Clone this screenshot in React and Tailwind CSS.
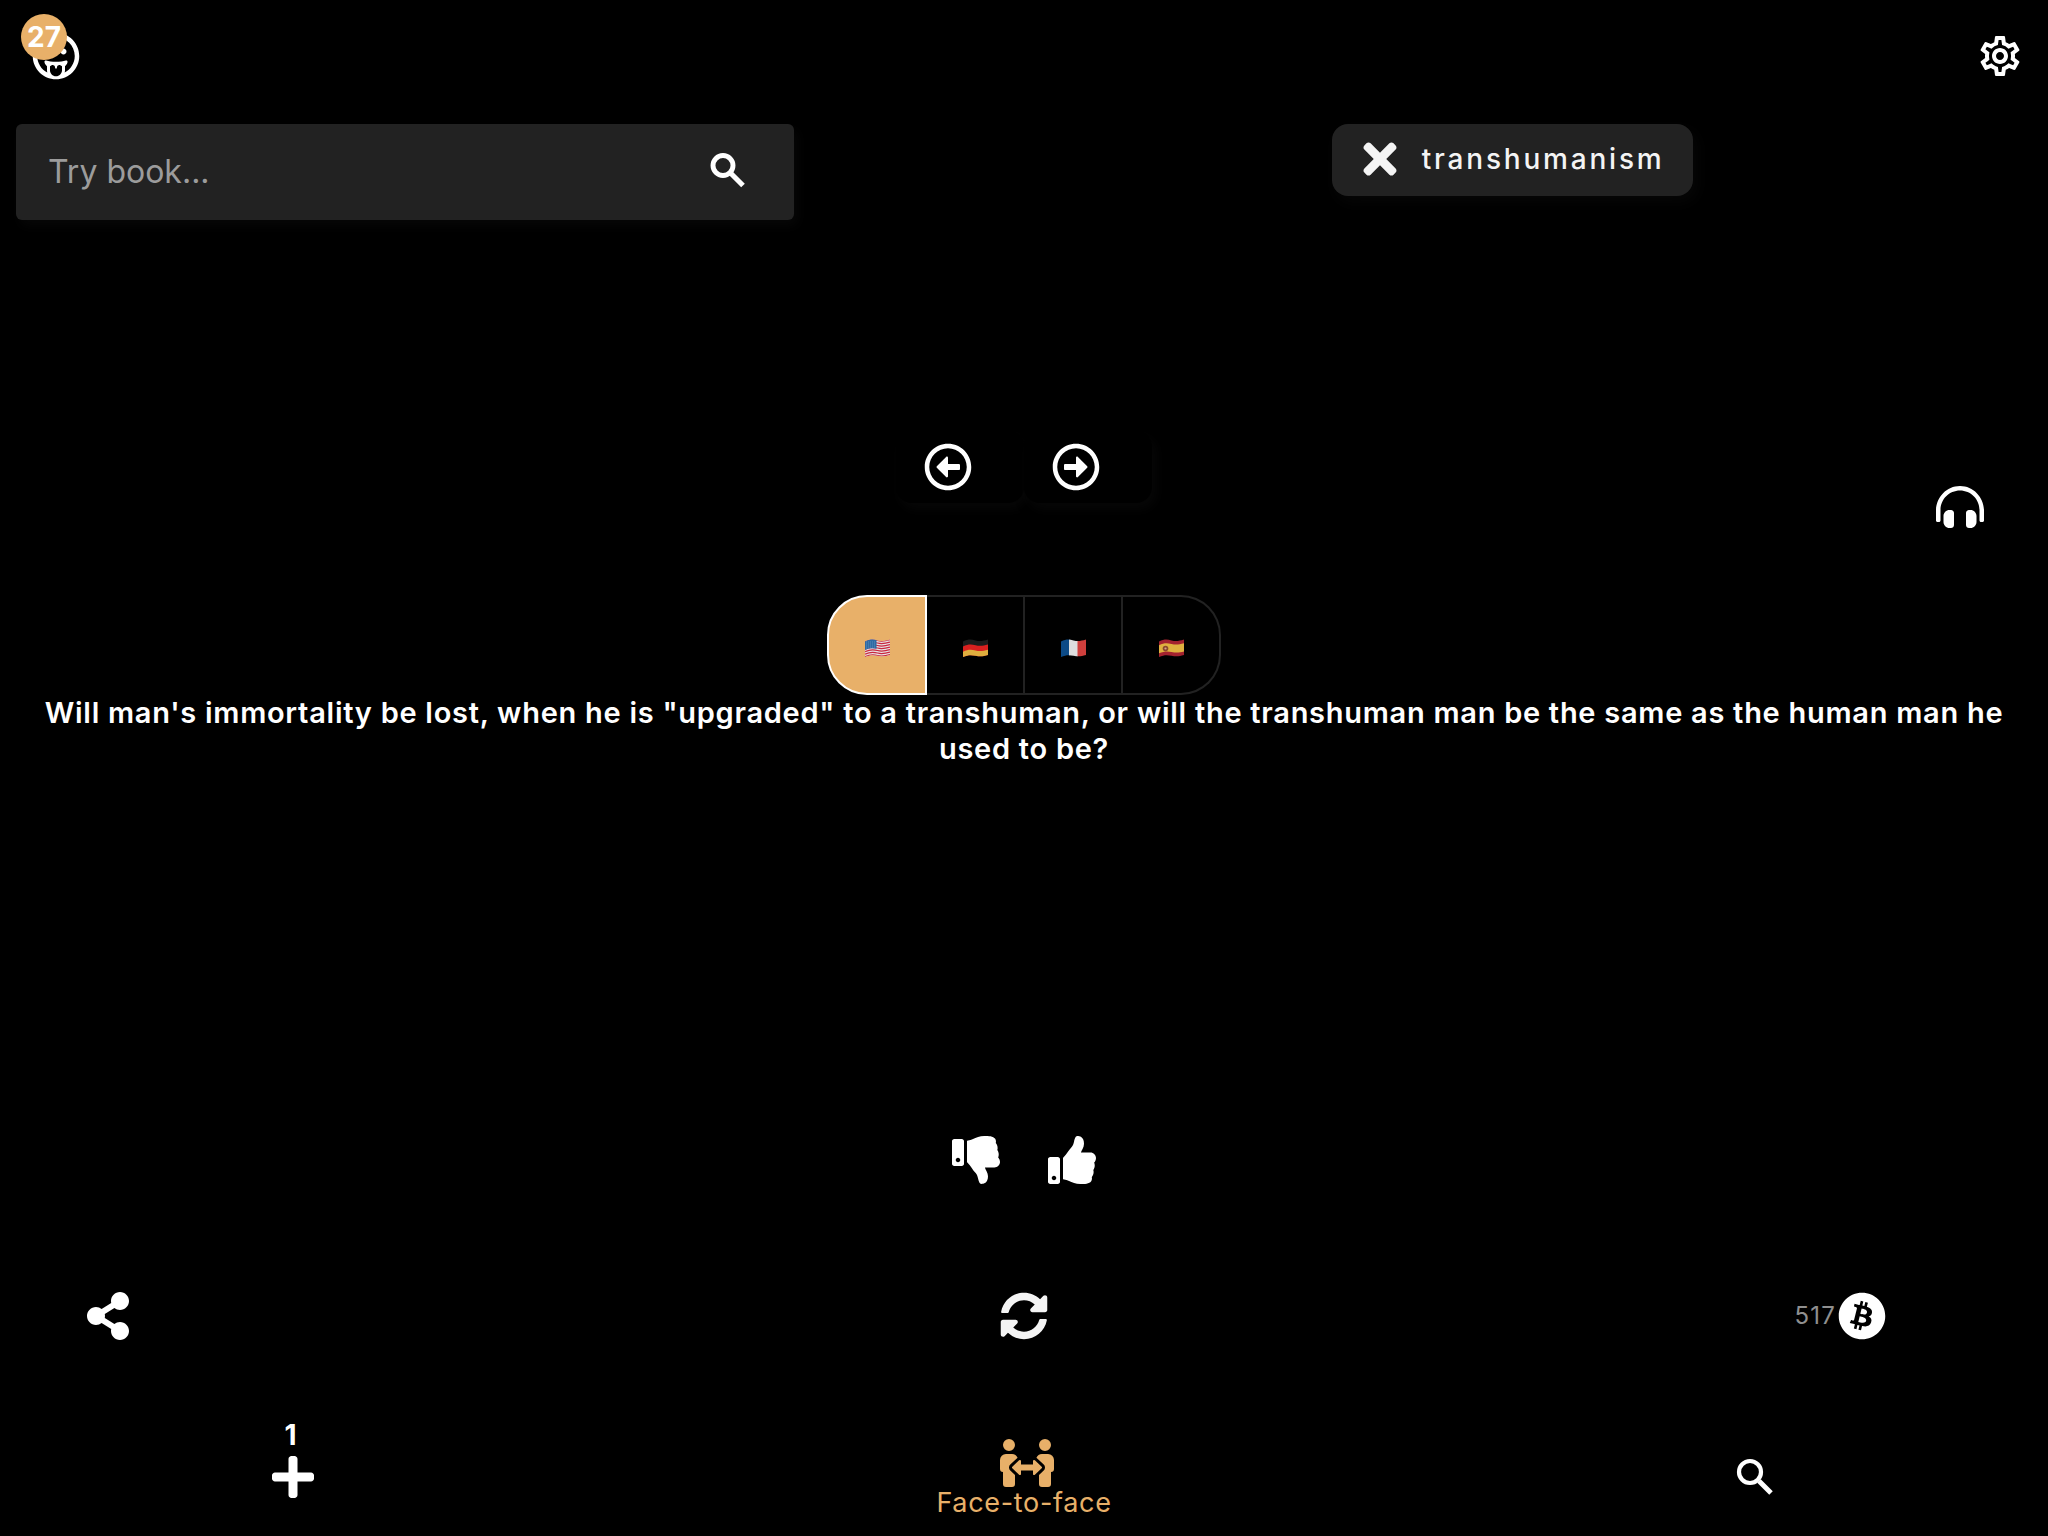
import React from "react";
import {
  FaRegGrinTongue,
  FaRegArrowAltCircleLeft,
  FaRegArrowAltCircleRight,
  FaHeadphonesAlt,
  FaThumbsDown,
  FaThumbsUp,
  FaShareAlt,
  FaPlus,
  FaSyncAlt,
  FaBitcoin,
  FaTimes,
} from "react-icons/fa";
import { MdOutlineSettings } from "react-icons/md";

const wave = "M0 2.5 C5 .2 8 .2 12.5 1.4 S20 2 25 .5 V16 C20 17.5 17 17.6 12.5 16.7 S5 15.8 0 18 Z";

function Flag({ id, children }) {
  return (
    <svg viewBox="0 0 25 18" className="h-[18px] w-[25px]" aria-hidden="true">
      <clipPath id={id}>
        <path d={wave} />
      </clipPath>
      <g clipPath={`url(#${id})`}>{children}</g>
    </svg>
  );
}

function PeopleArrows() {
  return (
    <svg viewBox="0 0 576 512" className="ml-1.5 h-12 w-[54px] shrink-0" fill="currentColor" aria-hidden="true">
      <path d="M96,128A64,64,0,1,0,32,64,64,64,0,0,0,96,128Zm0,176.08a44.11,44.11,0,0,1,13.64-32L181.77,204c1.65-1.55,3.77-2.31,5.61-3.57A63.91,63.91,0,0,0,128,160H64A64,64,0,0,0,0,224v96a32,32,0,0,0,32,32V480a32,32,0,0,0,32,32h64a32,32,0,0,0,32-32V383.61l-50.36-47.53A44.08,44.08,0,0,1,96,304.08ZM480,128a64,64,0,1,0-64-64A64,64,0,0,0,480,128Zm32,32H448a63.91,63.91,0,0,0-59.38,40.42c1.84,1.27,4,2,5.62,3.59l72.12,68.06a44.37,44.37,0,0,1,0,64L416,383.62V480a32,32,0,0,0,32,32h64a32,32,0,0,0,32-32V352a32,32,0,0,0,32-32V224A64,64,0,0,0,512,160ZM444.4,295.34l-72.12-68.06A12,12,0,0,0,352,236v36H224V236a12,12,0,0,0-20.28-8.73L131.6,295.34a12.4,12.4,0,0,0,0,17.47l72.12,68.07A12,12,0,0,0,224,372.14V336H352v36.14a12,12,0,0,0,20.28,8.74l72.12-68.07A12.4,12.4,0,0,0,444.4,295.34Z" />
    </svg>
  );
}

const stripe = (y) => `M0 ${y + 2} C5 ${y - 0.3} 8 ${y - 0.3} 12.5 ${y + 0.9} S20 ${y + 1.5} 25 ${y}`;

const flags = [
  {
    name: "English",
    art: (
      <Flag id="us">
        <rect width="25" height="18" fill="#e8dfe2" />
        {[0.6, 3.1, 5.6, 8.1, 10.6, 13.1, 15.6].map((y) => (
          <path key={y} d={stripe(y)} fill="none" stroke="#c9283f" strokeWidth="1.25" />
        ))}
        <path d="M0 0 H11.5 V9.8 C8 9 4 9 0 11 Z" fill="#2f6aa3" />
        {[3, 5, 7, 9].map((y) => (
          <path key={y} d={`M1 ${y} H11`} stroke="#7fa6cb" strokeWidth=".7" strokeDasharray=".8 1.2" />
        ))}
      </Flag>
    ),
  },
  {
    name: "Deutsch",
    art: (
      <Flag id="de">
        <rect width="25" height="18" fill="#1c1c1c" />
        <path d="M0 7.5 C5 5.2 8 5.2 12.5 6.2 S20 6.8 25 5.4 V18 H0 Z" fill="#d8201f" />
        <path d="M0 12.8 C5 10.5 8 10.5 12.5 11.5 S20 12.1 25 10.7 V18 H0 Z" fill="#dfae3e" />
      </Flag>
    ),
  },
  {
    name: "Français",
    art: (
      <Flag id="fr">
        <rect width="9" height="18" fill="#0c4a86" />
        <rect x="8" width="9" height="18" fill="#dedede" />
        <rect x="16.5" width="9" height="18" fill="#cf3f3c" />
      </Flag>
    ),
  },
  {
    name: "Español",
    art: (
      <Flag id="es">
        <rect width="25" height="18" fill="#a3222f" />
        <path
          d="M0 6.2 C5 3.9 8 3.9 12.5 5 S20 5.6 25 4.2 V12.4 C20 13.8 17 13.8 12.5 12.9 S5 12.2 0 14.2 Z"
          fill="#dfb13f"
        />
        <circle cx="6.5" cy="9.5" r="2.8" fill="#8a4a2c" />
        <circle cx="6.5" cy="9.5" r="1.1" fill="#d9a08a" />
      </Flag>
    ),
  },
];

export default function App() {
  return (
    <div className="flex min-h-screen flex-col overflow-x-hidden bg-black font-['Inter',sans-serif] text-white">
      <header className="flex h-28 items-center justify-between pr-6 pl-8">
        <button className="relative" aria-label="Profile">
          <FaRegGrinTongue size={48} />
          <span className="absolute -top-[18px] -left-[11px] flex size-[46px] items-center justify-center rounded-full bg-[#e8b069] text-[28px] font-bold">
            27
          </span>
        </button>
        <button aria-label="Settings">
          <MdOutlineSettings size={48} />
        </button>
      </header>

      <section className="mt-3 flex items-start pl-4">
        <form className="flex h-24 w-[38.3%] items-center rounded-md bg-[#222] pr-[42px] pl-8 shadow-[4px_6px_12px_#070707]">
          <input
            type="text"
            aria-label="Search topics"
            placeholder="Try book..."
            className="min-w-0 flex-1 bg-transparent text-[32px] outline-none placeholder:text-[#9c9c9c]"
          />
          <button type="button" aria-label="Search">
            <svg viewBox="0 0 48 48" className="size-12" fill="none" stroke="currentColor" aria-hidden="true">
              <circle cx="19" cy="17.5" r="10" strokeWidth="4.9" />
              <path d="M26 24.5 L39 37.5" strokeWidth="5.2" />
            </svg>
          </button>
        </form>
        <div className="flex flex-1 justify-center pl-[182px]">
          <button className="flex h-[72px] items-center gap-[18px] rounded-2xl bg-[#222] pr-7 pb-0.5 pl-6 text-[28px] font-medium tracking-widest text-[#f4f4f4] shadow-[4px_6px_16px_#070707]">
            <FaTimes size={48} />
            transhumanism
          </button>
        </div>
      </section>

      <section className="mt-[211px] flex justify-center">
        <button
          aria-label="Previous"
          className="flex h-[72px] w-32 items-center rounded-2xl bg-black pl-7 shadow-[4px_6px_12px_#070707]"
        >
          <FaRegArrowAltCircleLeft size={48} />
        </button>
        <button
          aria-label="Next"
          className="flex h-[72px] w-32 items-center rounded-2xl bg-black pl-7 shadow-[4px_6px_12px_#070707]"
        >
          <FaRegArrowAltCircleRight size={48} />
        </button>
      </section>

      <div className="-mt-5 flex justify-end pr-16">
        <button aria-label="Listen">
          <FaHeadphonesAlt size={48} />
        </button>
      </div>

      <main className="mt-16 flex flex-col items-center">
        <div className="flex">
          {flags.map((flag, i) => (
            <button
              key={flag.name}
              aria-label={flag.name}
              aria-pressed={i === 0}
              className={
                "flex h-[100px] items-center justify-center border-2 pt-1.5 " +
                (i === 0
                  ? "w-[100px] rounded-l-[40px] border-white bg-[#e8b069]"
                  : i === 3
                    ? "w-[98px] rounded-r-[40px] border-l-0 border-[#222]"
                    : "w-[98px] border-l-0 border-[#222]")
              }
            >
              {flag.art}
            </button>
          ))}
        </div>
        <h1 className="w-full px-8 text-center text-[29px] leading-9 font-semibold tracking-wide">
          Will man's immortality be lost, when he is "upgraded" to a transhuman, or will the transhuman man be the same
          as the human man he used to be?
        </h1>
      </main>

      <section className="mt-auto flex justify-center gap-12">
        <button aria-label="Dislike">
          <FaThumbsDown size={48} />
        </button>
        <button aria-label="Like">
          <FaThumbsUp size={48} />
        </button>
      </section>

      <section className="mt-[108px] grid grid-cols-3 items-center">
        <button aria-label="Share" className="ml-[84px] justify-self-start">
          <FaShareAlt size={48} />
        </button>
        <button aria-label="Refresh" className="justify-self-center text-[#f4f4f4]">
          <FaSyncAlt size={48} />
        </button>
        <div className="mr-[162px] flex items-center gap-0.5 justify-self-end">
          <span className="text-2xl tracking-wider text-[#8f8f8f]">517</span>
          <button aria-label="Tip with Bitcoin">
            <FaBitcoin size={48} />
          </button>
        </div>
      </section>

      <nav className="mt-[99px] grid h-[97px] grid-cols-[2fr_3fr_2fr]">
        <button className="relative flex flex-col items-center pt-[14px]" aria-label="Add, 1">
          <span className="absolute -top-5 pr-1 text-[28px] leading-8 font-bold">1</span>
          <FaPlus size={48} />
        </button>
        <button className="flex flex-col items-center text-[27px] leading-8 tracking-wide text-[#e8b069]">
          <PeopleArrows />
          Face-to-face
        </button>
        <button className="flex flex-col items-center pt-[14px]" aria-label="Search">
          <svg viewBox="0 0 48 48" className="size-12" fill="none" stroke="currentColor" aria-hidden="true">
            <circle cx="19" cy="19" r="11" strokeWidth="4.2" />
            <path d="M28 28 L40 40" strokeWidth="5" />
          </svg>
        </button>
      </nav>
    </div>
  );
}
